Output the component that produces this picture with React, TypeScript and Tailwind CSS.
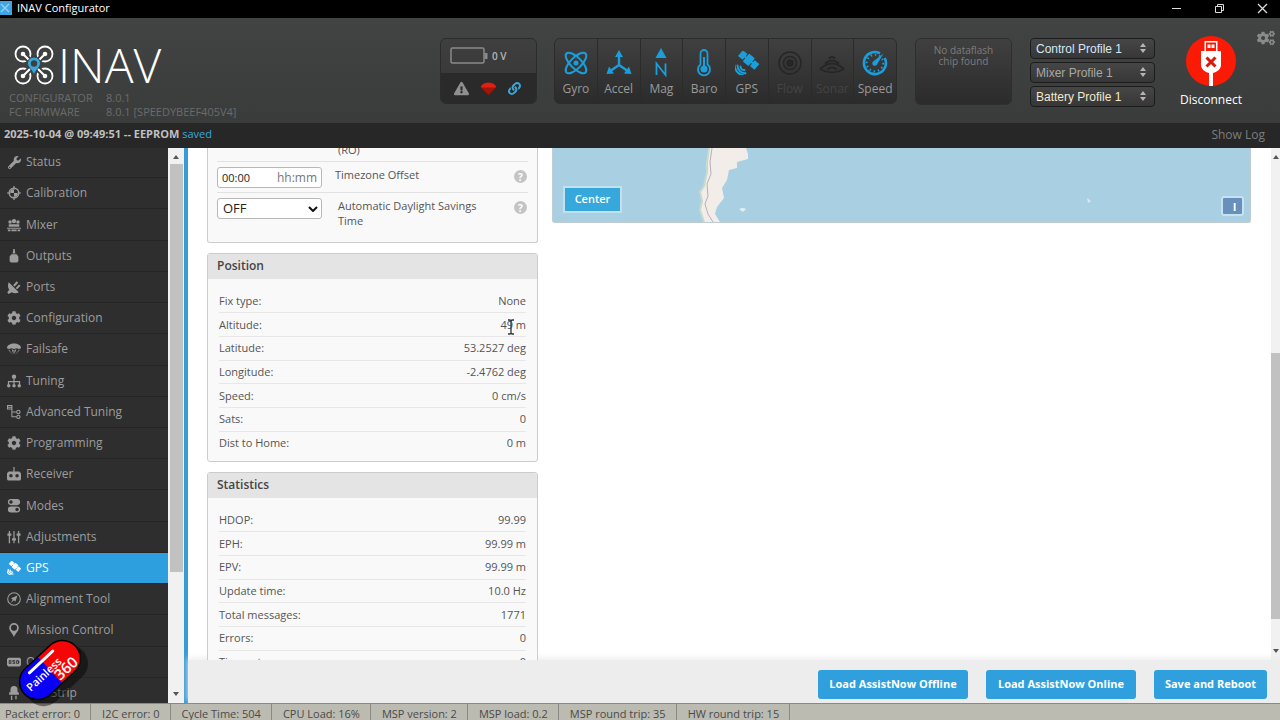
import type { ReactNode } from "react";
import { FaCog, FaCogs, FaExclamationTriangle, FaLink, FaWrench } from "react-icons/fa";

function Satellite({ className = "" }: { className?: string }) {
  return (
    <svg viewBox="0 0 24 24" className={className} fill="currentColor">
      <g transform="rotate(40 14 9)">
        <rect x="3" y="5.5" width="6" height="7.500" />
        <rect x="10" y="4" width="7.5" height="10" rx="1" />
        <rect x="18.5" y="5.5" width="6" height="7.500" />
        <rect x="8" y="8" width="12" height="2" />
      </g>
      <g fill="none" stroke="currentColor" strokeWidth="1.9" strokeLinecap="round">
        <path d="M5.500 15.500a3.500 3.500 0 0 0 4 3.500" />
        <path d="M2.500 14.500a7.500 7.500 0 0 0 8 7.700" />
        <path d="M-.5 14a11 11 0 0 0 9 10.500" />
      </g>
    </svg>
  );
}

function Glyph({ children }: { children: ReactNode }) {
  return (
    <svg viewBox="0 0 16 16" className="h-[14px] w-[14px]" fill="currentColor">
      {children}
    </svg>
  );
}

const tabs: { name: string; icon: ReactNode; active?: boolean }[] = [
  { name: "Status", icon: <FaWrench className="h-[13px] w-[13px]" /> },
  {
    name: "Calibration",
    icon: (
      <Glyph>
        <circle cx="8" cy="8" r="5.5" fill="none" stroke="currentColor" strokeWidth="1.6" />
        <path d="M7.300 0h1.400v4H7.300zM7.300 12h1.400v4H7.300zM0 7.300h4v1.400H0zM12 7.300h4v1.400h-4zM8 8V3.500A4.500 4.500 0 0 0 3.500 8zM8 8v4.500A4.500 4.500 0 0 0 12.500 8z" />
      </Glyph>
    ),
  },
  {
    name: "Mixer",
    icon: (
      <Glyph>
        <circle cx="3.500" cy="4.500" r="2" />
        <circle cx="8" cy="3.500" r="2.500" />
        <circle cx="12.500" cy="4.500" r="2" />
        <path d="M2 7h12v3H2zM0 11h16v1.300H0zM1 13h3v2H1zM5 13h6v2H5zM12 13h3v2h-3z" />
      </Glyph>
    ),
  },
  {
    name: "Outputs",
    icon: (
      <Glyph>
        <path d="M7.200 0h1.600l.7 5h-3zM5 6h6l2 2.500V14l-1.500 1.500h-7L3 14V8.500z" />
      </Glyph>
    ),
  },
  {
    name: "Ports",
    icon: (
      <Glyph>
        <path d="M2 2.500 13.500 14c-2.500 1.800-5.800 1.500-8.200-.1L2 16l-1.700-1.600 2.200-3.200C.8 8.800.7 5 2 2.500zM7 6l4-4.500L12.800 3l-4 4.500zM10 9l3.700-4 1.800 1.500-4 4.200z" />
      </Glyph>
    ),
  },
  { name: "Configuration", icon: <FaCog className="h-[14px] w-[14px]" /> },
  {
    name: "Failsafe",
    icon: (
      <Glyph>
        <path d="M0 7c0-7 16-7 16 0l-2.500 1L11 7 8 8 5 7 2.500 8zM1 8.500l1.600.6L7 15zM15 8.500l-1.600.6L9 15zM5.300 8.300 7.500 9v5zM10.700 8.300 8.500 9v5z" />
      </Glyph>
    ),
  },
  {
    name: "Tuning",
    icon: (
      <Glyph>
        <circle cx="8" cy="3" r="2.500" />
        <path d="M7.300 5h1.400v3H15v4h-1.400V9.400H8.700V12H7.300V9.400H2.400V12H1V8h6.300z" />
        <circle cx="2" cy="13.500" r="2" />
        <circle cx="8" cy="13.500" r="2" />
        <circle cx="14" cy="13.500" r="2" />
      </Glyph>
    ),
  },
  {
    name: "Advanced Tuning",
    icon: (
      <Glyph>
        <g fill="none" stroke="currentColor" strokeWidth="1.200">
          <path d="M.6.600h5v4h-5zM.6 2.600h5M5.600 3v10.500H11M5.600 8H11" />
          <circle cx="13" cy="8" r="1.900" />
          <circle cx="13" cy="13.500" r="1.900" />
        </g>
      </Glyph>
    ),
  },
  { name: "Programming", icon: <FaCog className="h-[14px] w-[14px]" /> },
  {
    name: "Receiver",
    icon: (
      <Glyph>
        <path
          fillRule="evenodd"
          d="M7.300 0h1.400v5H14l2 2v7l-1 1.500H1L0 14V7l2-2h5.300zM4.500 8a2 2 0 1 0 0 4 2 2 0 0 0 0-4zm7 0a2 2 0 1 0 0 4 2 2 0 0 0 0-4z"
        />
      </Glyph>
    ),
  },
  {
    name: "Modes",
    icon: (
      <Glyph>
        <path
          fillRule="evenodd"
          d="M4.500 0h7a3.500 3.500 0 0 1 0 7h-7a3.500 3.500 0 0 1 0-7zm0 1.500a2 2 0 1 0 0 4 2 2 0 0 0 0-4zM4.500 8.500h7a3.500 3.500 0 0 1 0 7h-7a3.500 3.500 0 0 1 0-7zm7 1.500a2 2 0 1 0 0 4 2 2 0 0 0 0-4z"
        />
      </Glyph>
    ),
  },
  {
    name: "Adjustments",
    icon: (
      <Glyph>
        <path d="M2 1h1.500v14H2zM7.300 1h1.400v14H7.300zM12.500 1H14v14h-1.500zM.500 4h4.500v2.500H.500zM5.800 9.500h4.400V12H5.800zM11 4h4.500v2.500H11z" />
      </Glyph>
    ),
  },
  { name: "GPS", icon: <Satellite className="h-[14px] w-[14px]" />, active: true },
  {
    name: "Alignment Tool",
    icon: (
      <Glyph>
        <circle cx="8" cy="8" r="7.200" fill="none" stroke="currentColor" strokeWidth="1.200" />
        <path d="M12 4 9.500 11 8 9.500 4.500 12.500 6.500 8.500 4.500 7z" />
      </Glyph>
    ),
  },
  {
    name: "Mission Control",
    icon: (
      <Glyph>
        <path
          fillRule="evenodd"
          d="M8 0a5.500 5.500 0 0 1 5.500 5.500C13.500 9 10 11.500 8 16 6 11.500 2.500 9 2.500 5.500A5.500 5.500 0 0 1 8 0zm0 2a3.500 3.500 0 1 0 0 7 3.500 3.500 0 0 0 0-7z"
        />
      </Glyph>
    ),
  },
  {
    name: "OSD",
    icon: (
      <Glyph>
        <path
          fillRule="evenodd"
          d="M1.500 3h13L16 4.500v7L14.500 13h-13L0 11.500v-7zM2 6v4h3V6zm1 1h1v2H3zM6.300 6v2.400h1.900V9H6.300v1h3V7.600H7.400V7h1.900V6zm4.300 0v4H13l1-1V7l-1-1zm1 1h1v2h-1z"
        />
      </Glyph>
    ),
  },
  {
    name: "LED Strip",
    icon: (
      <Glyph>
        <path d="M4 7V4a4 4 0 0 1 8 0v3h1.500v3h-11V7zM4.500 11H6v5H4.500zM9.500 11H11v4H9.500z" />
      </Glyph>
    ),
  },
];

const sensors: { name: string; icon: ReactNode; off?: boolean }[] = [
  {
    name: "Gyro",
    icon: (
      <g fill="none" stroke="currentColor" strokeWidth="2">
        <ellipse cx="12" cy="12" rx="13.500" ry="5.500" transform="rotate(45 12 12)" />
        <ellipse cx="12" cy="12" rx="13.500" ry="5.500" transform="rotate(-45 12 12)" />
        <circle cx="12" cy="12" r="1.500" fill="currentColor" />
      </g>
    ),
  },
  {
    name: "Accel",
    icon: (
      <>
        <path d="M12 5v9M12 14 4 19.500M12 14l8 5.500" fill="none" stroke="currentColor" strokeWidth="2.400" />
        <path d="M12-1l4 7H8zM-.5 23 2 15.500 7 22.500zM24.500 23 22 15.500 17 22.500z" />
      </>
    ),
  },
  {
    name: "Mag",
    icon: (
      <>
        <path d="M12-3l5.500 10h-11z" />
        <path d="M7.500 24V12.500L16.500 24V12.500" fill="none" stroke="currentColor" strokeWidth="1.800" />
      </>
    ),
  },
  {
    name: "Baro",
    icon: (
      <>
        <path
          d="M8.500 2.500a3.500 3.500 0 0 1 7 0v11a6 6 0 1 1-7 0z"
          fill="none"
          stroke="currentColor"
          strokeWidth="1.800"
        />
        <circle cx="12" cy="18" r="3.500" />
        <path d="M11 6h2v11h-2z" />
      </>
    ),
  },
  { name: "GPS", icon: <Satellite /> },
  {
    name: "Flow",
    icon: (
      <g fill="none" stroke="currentColor" strokeWidth="1.500">
        <circle cx="12" cy="12" r="11" />
        <circle cx="12" cy="12" r="6.500" />
        <circle cx="12" cy="12" r="3" fill="currentColor" />
      </g>
    ),
    off: true,
  },
  {
    name: "Sonar",
    icon: (
      <g fill="none" stroke="currentColor" strokeWidth="2">
        <path d="M9 7.500q3-3 6 0M5 12.500q7-6 14 0M0 18q3-2 4-3 8-5 16 0 2 2 4 3" />
        <path d="M0 18q12 7 24 0M7 18.500q5-4 10 0" />
      </g>
    ),
    off: true,
  },
  {
    name: "Speed",
    icon: (
      <>
        <path d="M17 2.300A11 11 0 1 0 21.700 7" fill="none" stroke="currentColor" strokeWidth="2.600" />
        <circle cx="12" cy="12" r="8.300" fill="none" stroke="currentColor" strokeWidth="2" strokeDasharray="1.500 2.800" />
        <path d="M20.500 2.500 14 13.500a2.500 2.500 0 1 1-3.500-3.300z" />
      </>
    ),
  },
];

const profiles = [
  { label: "Control Profile 1", color: "text-[#d5e8f7]" },
  { label: "Mixer Profile 1", color: "text-[#a8a8a8]" },
  { label: "Battery Profile 1", color: "text-[#f3e9cd]" },
];

const position = [
  ["Fix type:", "None"],
  ["Altitude:", "49 m"],
  ["Latitude:", "53.2527 deg"],
  ["Longitude:", "-2.4762 deg"],
  ["Speed:", "0 cm/s"],
  ["Sats:", "0"],
  ["Dist to Home:", "0 m"],
];

const statistics = [
  ["HDOP:", "99.99"],
  ["EPH:", "99.99 m"],
  ["EPV:", "99.99 m"],
  ["Update time:", "10.0 Hz"],
  ["Total messages:", "1771"],
  ["Errors:", "0"],
  ["Timeouts:", "0"],
];

const statusItems = [
  "Packet error: 0",
  "I2C error: 0",
  "Cycle Time: 504",
  "CPU Load: 16%",
  "MSP version: 2",
  "MSP load: 0.2",
  "MSP round trip: 35",
  "HW round trip: 15",
];

function TitleBar() {
  return (
    <div className="flex h-[18px] shrink-0 items-center bg-black pb-[2px] text-white">
      <svg viewBox="0 0 12 14" className="h-[14px] w-3">
        <rect width="12" height="14" fill="#3fa5e3" />
        <path d="M1 3l8 8M9 3l-8 8" stroke="#8fd0f5" strokeWidth="1.500" />
      </svg>
      <span className="ml-[5px] text-[11px] leading-4">INAV Configurator</span>
      <div className="ml-auto flex items-center gap-8 pr-3">
        <button aria-label="Minimize">
          <svg viewBox="0 0 11 11" className="h-[11px] w-[11px]" stroke="#ddd">
            <path d="M1 5.500h9" />
          </svg>
        </button>
        <button aria-label="Restore">
          <svg viewBox="0 0 11 11" className="h-[11px] w-[11px]" fill="none" stroke="#ddd">
            <path d="M1.500 3.500h6v6h-6zM3.500 3.500v-2h6v6h-2" />
          </svg>
        </button>
        <button aria-label="Close">
          <svg viewBox="0 0 11 11" className="h-[11px] w-[11px]" stroke="#ddd" strokeWidth="1.300">
            <path d="M1 1l9 9M10 1l-9 9" />
          </svg>
        </button>
      </div>
    </div>
  );
}

function Logo() {
  return (
    <div className="pl-[9px] pt-[25px]">
      <div className="flex h-[44px] items-center pl-[5px]">
        <svg viewBox="0 0 40 40" className="h-10 w-10" fill="none" stroke="#fff" strokeWidth="1.800">
          <circle cx="9" cy="9" r="7.500" />
          <circle cx="31" cy="9" r="7.500" />
          <circle cx="9" cy="31" r="7.500" />
          <circle cx="31" cy="31" r="7.500" />
          <path d="M10 10l7 7M30 10l-7 7M10 30l7-7M30 30l-7-7" strokeWidth="6" stroke="#3e403f" />
          <path d="M9 9l7 7M31 9l-7 7M9 31l7-7M31 31l-7-7" strokeWidth="2" strokeLinecap="round" />
          <g fill="#fff" stroke="none">
            <circle cx="9" cy="9" r="2.300" />
            <circle cx="31" cy="9" r="2.300" />
            <circle cx="9" cy="31" r="2.300" />
            <circle cx="31" cy="31" r="2.300" />
          </g>
          <path
            d="M20 12a6.500 6.500 0 0 1 6.500 6.500C26.500 22 22.500 24 20 30c-2.500-6-6.500-8-6.500-11.500A6.500 6.500 0 0 1 20 12z"
            fill="#37a8db"
            stroke="#3e403f"
            strokeWidth="1"
          />
          <circle cx="20" cy="18.500" r="3.200" fill="#3e403f" stroke="none" />
        </svg>
        <span className="ml-1 text-[48px] font-light leading-[44px] text-white">INAV</span>
      </div>
      <table className="mt-1 text-[11px] leading-[14px] text-[#6b6b6b]">
        <tbody>
          <tr>
            <td className="w-[97px] p-0">CONFIGURATOR</td>
            <td className="p-0">8.0.1</td>
          </tr>
          <tr>
            <td className="p-0">FC FIRMWARE</td>
            <td className="p-0">8.0.1 [SPEEDYBEEF405V4]</td>
          </tr>
        </tbody>
      </table>
    </div>
  );
}

function Header() {
  return (
    <header className="flex h-[105px] shrink-0 items-start bg-gradient-to-b from-[#424443] to-[#3a3c3b]">
      <Logo />

      <div className="ml-auto mt-5 flex h-[66px] w-[97px] flex-col overflow-hidden rounded-md border border-[#2b2b2b] bg-gradient-to-b from-[#3f3f3f] to-[#353535]">
        <div className="flex flex-1 items-center gap-1 pl-[9px]">
          <svg viewBox="0 0 38 18" className="h-[18px] w-[38px]" fill="none" stroke="#8a8a8a" strokeWidth="1.500">
            <rect x="1" y="1" width="33" height="15" rx="1.500" />
            <path d="M36 6v6" strokeWidth="3" />
          </svg>
          <span className="text-[10px] font-semibold text-[#b5b5b5]">0 V</span>
        </div>
        <div className="flex h-[30px] items-center gap-3 bg-[#2a2a2a] pl-[13px]">
          <FaExclamationTriangle className="h-[15px] w-[15px] text-[#8f8f8f]" />
          <svg viewBox="0 0 16 16" className="h-[15px] w-[15px]">
            <path d="M0 7c0-7 16-7 16 0L8 15z" fill="#a3150a" />
            <path d="M0 7c0-7 16-7 16 0z" fill="#e02010" />
          </svg>
          <FaLink className="h-[13px] w-[13px] text-[#37a8db]" />
        </div>
      </div>

      <ul className="ml-[17px] mt-5 flex h-[66px] w-[343px] overflow-hidden rounded-md border border-[#2b2b2b] bg-gradient-to-b from-[#404040] to-[#2b2b2b]">
        {sensors.map((sensor) => (
          <li
            key={sensor.name}
            className="flex flex-1 flex-col items-center border-r border-[#2b2b2b] pt-3 last:border-r-0"
          >
            <svg
              viewBox="0 0 24 24"
              className={`h-6 w-6 overflow-visible ${sensor.off ? "text-[#262626]" : "text-[#1a9fdc]"}`}
              fill="currentColor"
            >
              {sensor.icon}
            </svg>
            <span className={`mt-[6px] text-xs leading-4 ${sensor.off ? "text-[#444]" : "text-[#9a9a9a]"}`}>
              {sensor.name}
            </span>
          </li>
        ))}
      </ul>

      <div className="ml-[18px] mt-5 h-[67px] w-[97px] rounded-md border border-[#2e2e2e] bg-gradient-to-b from-[#3f403f] to-[#2b2b2b] px-3 pt-[6px] text-center text-[10px] leading-[11px] text-[#7d7d7d]">
        No dataflash chip found
      </div>

      <div className="ml-[18px] mt-5 flex w-[125px] flex-col gap-[3px]">
        {profiles.map((profile) => (
          <div key={profile.label} className="relative">
            <select
              aria-label={profile.label}
              className={`block h-[21px] w-full appearance-none rounded-sm border border-[#1c1c1c] bg-gradient-to-b from-[#454645] to-[#363736] pl-[5px] font-[Liberation_Sans,Arial,sans-serif] text-xs ${profile.color}`}
            >
              <option>{profile.label}</option>
            </select>
            <svg viewBox="0 0 8 12" className="pointer-events-none absolute right-2 top-1 h-3 w-2" fill="#b5b5b5">
              <path d="M4 1l3 4H1zM4 11 1 7h6z" />
            </svg>
          </div>
        ))}
      </div>

      <button className="ml-[25px] mt-[18px] flex w-[62px] flex-col items-center">
        <svg viewBox="0 0 50 50" className="h-[50px] w-[50px]">
          <circle cx="25" cy="25" r="25" fill="#fb1a05" />
          <path fill="#fff" d="M18.500 5h13v10h3.500v14c0 4-4 7-8 8v13h-4V37c-4-1-8-4-8-8V15h3.500z" />
          <path fill="#fb1a05" d="M20 6.500h10V15H20z" />
          <path fill="#fff" d="M21.500 8.500h3v3.500h-3zM25.500 8.500h3v3.500h-3z" />
          <path d="M20.500 21.500l9 9M29.500 21.500l-9 9" stroke="#d9190a" strokeWidth="3" />
        </svg>
        <span className="mt-[5px] text-xs leading-[18px] text-white">Disconnect</span>
      </button>
      <button aria-label="Options" className="ml-[15px] mr-[5px] mt-3 text-[#8a8a8a]">
        <FaCogs className="h-4 w-[18px]" />
      </button>
    </header>
  );
}

function Sidebar() {
  return (
    <nav className="w-[168px] shrink-0 overflow-hidden bg-[#2e2e2e]">
      <ul className="-mt-px flex h-[calc(100%+7px)] flex-col">
        {tabs.map((tab) => (
          <li key={tab.name} className="flex-1 border-b border-[#262626]">
            <a
              href="#"
              className={`flex h-full items-center gap-[5px] pl-[7px] text-xs leading-5 ${
                tab.active ? "bg-[#2d9fdf] text-white" : "text-[#9d9d9d]"
              }`}
            >
              <span className="flex w-[14px] justify-center">{tab.icon}</span>
              {tab.name}
            </a>
          </li>
        ))}
      </ul>
    </nav>
  );
}

function Arrow({ down = false }: { down?: boolean }) {
  return (
    <svg viewBox="0 0 8 5" className="h-[5px] w-2" fill="#555">
      <path d={down ? "M1 0h6L4 4z" : "M1 5h6L4 1z"} />
    </svg>
  );
}

function Card({ title, rows }: { title: string; rows: string[][] }) {
  return (
    <section className="rounded-[3px] border border-[#ccc] bg-[#f9f9f9] pb-[7px]">
      <h2 className="rounded-t-[2px] bg-[#e4e4e4] px-[9px] pb-px text-xs font-semibold leading-6 text-[#444]">{title}</h2>
      <div className="px-[11px] pt-[11px]">
        <table className="h-[164px] w-full text-[11px] leading-4 text-[#555]">
          <tbody>
            {rows.map(([label, value]) => (
              <tr key={label} className="border-b border-[#e7e7e7] last:border-b-0">
                <th className="p-0 text-left font-normal">{label}</th>
                <td className="p-0 text-right">{value}</td>
              </tr>
            ))}
          </tbody>
        </table>
      </div>
    </section>
  );
}

function Help() {
  return (
    <span className="ml-auto flex h-[13px] w-[13px] shrink-0 items-center justify-center rounded-full bg-[#c4c4c4] text-[10px] font-bold leading-none text-white">
      ?
    </span>
  );
}

function GpsSettings() {
  return (
    <section className="rounded-b-[3px] border border-t-0 border-[#ccc] bg-[#f9f9f9] px-[9px] text-[11px] leading-[15px] text-[#555]">
      <div className="h-[29px] border-b border-[#e2e2e2] pl-[121px] pt-[9px]">(RO)</div>
      <div className="flex h-[31px] items-start border-b border-[#e2e2e2] pr-[1px] pt-[5px]">
        <div className="flex h-[21px] w-[105px] items-center rounded-[3px] border border-[#b8b8b8] bg-white px-1">
          <input id="tz" defaultValue="00:00" className="w-10 min-w-0 text-[#222] outline-none" />
          <span className="ml-auto text-xs text-[#777]">hh:mm</span>
        </div>
        <label htmlFor="tz" className="ml-[13px]">
          Timezone Offset
        </label>
        <span className="ml-auto pt-[3px]">
          <Help />
        </span>
      </div>
      <div className="flex h-[49px] items-start pr-[1px] pt-[5px]">
        <div className="relative shrink-0">
          <select
            id="dst"
            className="block h-[21px] w-[105px] appearance-none rounded-[3px] border border-[#b8b8b8] bg-white pl-[5px] text-[13px] text-[#222]"
          >
            <option>OFF</option>
          </select>
          <svg viewBox="0 0 10 6" className="pointer-events-none absolute right-1 top-2 h-[6px] w-[10px]" fill="none" stroke="#111" strokeWidth="2">
            <path d="M1 1l4 4 4-4" />
          </svg>
        </div>
        <label htmlFor="dst" className="ml-4 w-[155px]">
          Automatic Daylight Savings Time
        </label>
        <span className="ml-auto pt-[3px]">
          <Help />
        </span>
      </div>
    </section>
  );
}

function WorldMap() {
  return (
    <div className="relative mr-5 h-[75px] flex-1 overflow-hidden rounded-b-[3px] border border-t-0 border-[#c0cdd2] bg-[#a8cfe2]">
      <svg viewBox="0 0 60 74" className="absolute left-[141px] top-0 h-[74px] w-[60px]">
        <path
          d="M15 0 13 14 13 24 10 38 6 44 8 53 6 62 10 74H26L21 66 23 59 30 50 28 40 33 32 35 22 43 20 43 14 54 11 54 6 52 0z"
          fill="#f2ede8"
        />
        <path d="M15 0 13 14 13 24 10 38 6 44 8 53 6 62 10 74" fill="none" stroke="#c5dccd" strokeWidth="2" />
        <path d="M18 0 16 14 17 26 13 36 14 48 11 56 14 66 19 74" fill="none" stroke="#b9aebb" />
        <path d="M45 61l3-1 3 1-2 3zM49 60l3 1-2 2z" fill="#e3eeee" />
      </svg>
      <svg viewBox="0 0 6 6" className="absolute left-[533px] top-[50px] h-[6px] w-[6px]">
        <path d="M1 0l4 3-3 2z" fill="#d9e9ee" />
      </svg>
      <button className="absolute bottom-[9px] left-[10px] h-[27px] w-[59px] border-2 border-[#c3e0ef] bg-[#37a8db] text-[11px] font-semibold text-white">
        Center
      </button>
      <button className="absolute bottom-[6px] right-[6px] h-5 w-[23px] rounded-[3px] border-2 border-[#c8e0ef] bg-[#6790bd] pl-1 text-[11px] font-bold leading-none text-white">
        I
      </button>
    </div>
  );
}

function Content() {
  return (
    <div className="flex min-h-0 flex-1 bg-white">
      <div className="flex min-w-0 flex-1 items-start gap-[14px] overflow-hidden pl-[19px]">
        <div className="relative -mt-[15px] flex w-[331px] shrink-0 flex-col gap-[10px]">
          <GpsSettings />
          <Card title="Position" rows={position} />
          <Card title="Statistics" rows={statistics} />
          {/* text cursor over the altitude value */}
          <svg viewBox="0 0 8 16" className="absolute left-[300px] top-[186px] h-4 w-2" fill="none" stroke="#333" strokeWidth="1.300">
            <path d="M1 1h2l1 1 1-1h2M4 2v12M1 15h2l1-1 1 1h2" />
          </svg>
        </div>
        <WorldMap />
      </div>
      <div className="flex w-[9px] flex-col items-center overflow-hidden bg-[#f1f1f1] py-[6px]">
        <Arrow />
        <div className="w-full grow-[194]" />
        <div className="w-full grow-[265] bg-[#c1c1c1]" />
        <div className="w-full grow-[30]" />
        <Arrow down />
      </div>
    </div>
  );
}

export default function App() {
  return (
    <div className="flex h-screen flex-col overflow-hidden font-['Open_Sans',sans-serif]">
      <TitleBar />
      <Header />
      <div className="flex h-[25px] shrink-0 items-center bg-[#272727] pb-[2px] pl-1 pr-[15px] text-xs">
        <p className="text-[11px] font-bold text-[#c0c0c0]">
          2025-10-04 @ 09:49:51 -- EEPROM <span className="font-normal text-[#37a8db]">saved</span>
        </p>
        <button className="ml-auto text-[#7d7d7d]">Show Log</button>
      </div>

      <div className="flex min-h-0 flex-1">
        <Sidebar />
        <div className="flex w-4 shrink-0 flex-col items-center bg-[#f1f1f1] py-[6px]">
          <Arrow />
          <div className="mt-[5px] w-[13px] grow-[407] bg-[#c1c1c1]" />
          <div className="grow-[120]" />
          <Arrow down />
        </div>
        <main className="flex min-w-0 flex-1 flex-col border-l-4 border-[#3a9bd4]">
          <Content />
          <div className="flex h-[43px] shrink-0 items-center justify-end gap-[18px] bg-[#ededed] pr-[13px] pt-[6px] shadow-[0_-2px_6px_#ededed] [&>button]:h-[29px] [&>button]:rounded-[3px] [&>button]:bg-[#2f9fdd] [&>button]:text-[11px] [&>button]:font-bold [&>button]:text-white">
            <button className="w-[150px]">Load AssistNow Offline</button>
            <button className="w-[150px]">Load AssistNow Online</button>
            <button className="w-[113px]">Save and Reboot</button>
          </div>
        </main>
      </div>

      <footer className="flex h-[17px] shrink-0 overflow-hidden border-t border-[#8a8a84] bg-[#bcbbb1] pl-[5px] text-[11px] leading-5 text-[#4a4a4a]">
        {statusItems.map((item) => (
          <span key={item} className="mr-[11px] border-r border-[#8a8a84] pr-[10px]">
            {item}
          </span>
        ))}
      </footer>

      {/* channel badge */}
      <svg viewBox="0 0 80 80" className="absolute bottom-[10px] left-[14px] h-20 w-20">
        <g transform="rotate(-43 36 40)">
          <rect x="3" y="25" width="72" height="37" rx="18" fill="#000" opacity="0.45" transform="translate(-2 5)" />
          <path d="M36 22H19a18 18 0 0 0 0 36h17z" fill="#0a00f5" />
          <path d="M36 22h17a18 18 0 0 1 0 36H36z" fill="#f50505" />
          <rect x="1" y="22" width="70" height="36" rx="18" fill="none" stroke="#000" strokeWidth="1.500" />
          <path d="M19 28h32" stroke="#fff" strokeWidth="3" strokeLinecap="round" />
          <text x="7" y="43" fill="#fff" fontSize="11" fontWeight="600">
            Painless
          </text>
          <text x="36" y="55" fill="#fff" fontSize="15" fontWeight="600">
            360
          </text>
        </g>
      </svg>
    </div>
  );
}
